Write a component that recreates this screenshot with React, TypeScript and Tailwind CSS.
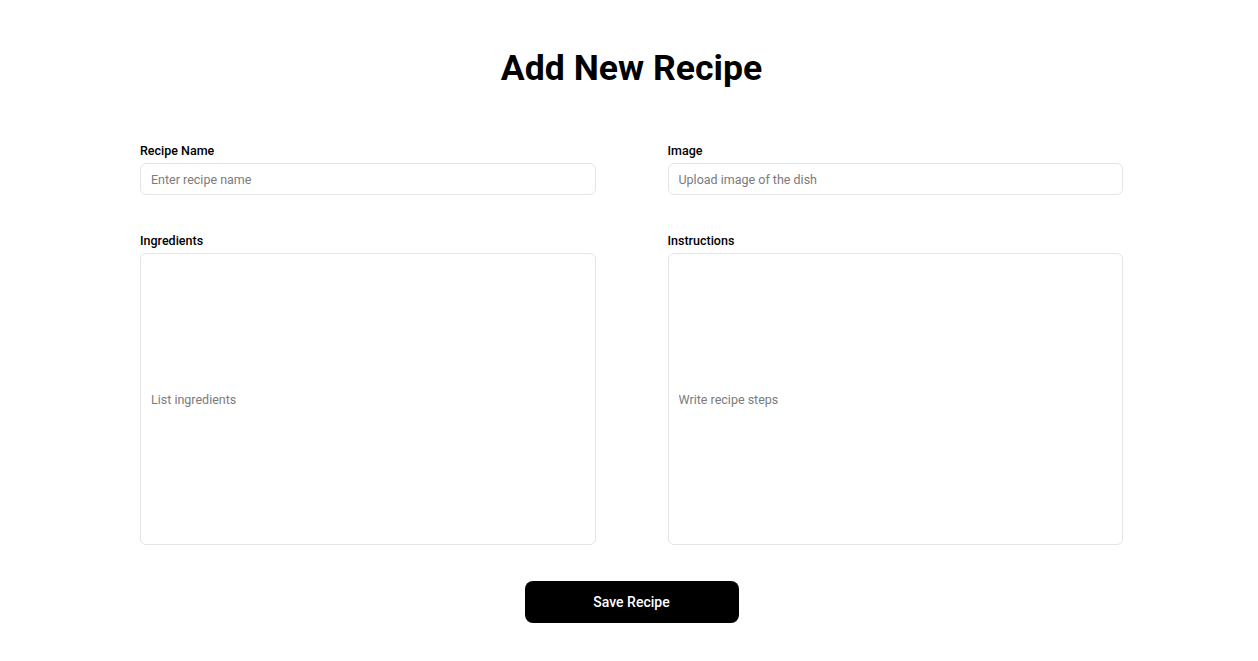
import React from "react";

const Field = ({
  label,
  placeholder,
  tall,
}: {
  label: string;
  placeholder: string;
  tall?: boolean;
}) => (
  <div className="flex flex-col">
    <label className="text-[12.5px] font-medium text-black leading-[16px] mb-[4px]">
      {label}
    </label>
    <input
      type="text"
      placeholder={placeholder}
      className={`w-full ${
        tall ? "h-[292px]" : "h-[32px]"
      } rounded-md border border-[#e5e5e5] bg-white px-[10px] text-[12.5px] text-black placeholder:text-[#7b7b7b] outline-none`}
    />
  </div>
);

const App = () => {
  return (
    <div
      className="w-full min-h-screen bg-white pl-[140px] pr-[135px] pt-[48px]"
      style={{ fontFamily: "Roboto, 'Liberation Sans', sans-serif" }}
    >
      <h1 className="text-center text-[35.6px] font-bold leading-[40px] text-black">
        Add New Recipe
      </h1>
      <form className="mt-[55px] grid grid-cols-2 gap-x-[72px] gap-y-[38px]">
        <Field label="Recipe Name" placeholder="Enter recipe name" />
        <Field label="Image" placeholder="Upload image of the dish" />
        <Field label="Ingredients" placeholder="List ingredients" tall />
        <Field label="Instructions" placeholder="Write recipe steps" tall />
      </form>
      <div className="mt-[36px] flex justify-center">
        <button
          type="button"
          className="h-[42px] w-[214px] rounded-lg bg-black text-[14px] font-medium text-white"
        >
          Save Recipe
        </button>
      </div>
    </div>
  );
};

export default App;
